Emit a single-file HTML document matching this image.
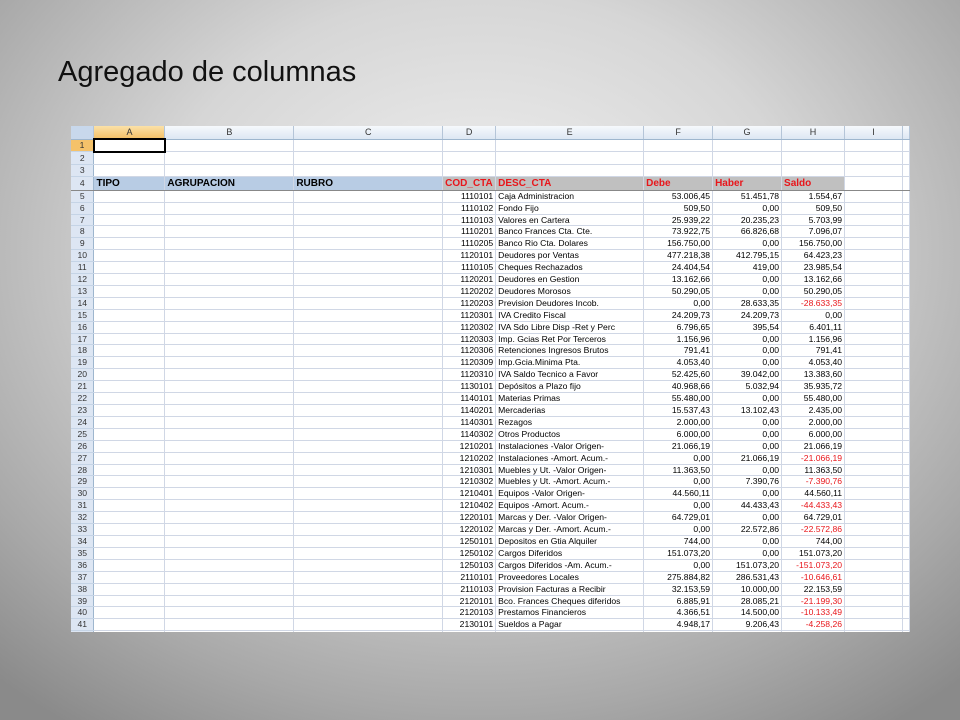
<!DOCTYPE html>
<html><head><meta charset="utf-8"><style>
html,body{margin:0;padding:0}
body{width:960px;height:720px;overflow:hidden;position:relative;background:radial-gradient(ellipse 75% 80% at 50% 35%,#f2f2f2 0%,#d6d6d6 45%,#a8a8a8 80%,#8a8a8a 100%);font-family:"Liberation Sans",sans-serif}
h1{position:absolute;left:58px;top:56px;margin:0;font-weight:normal;font-size:29px;color:#111}
#sh{position:absolute;left:71px;top:126px;width:839px;height:506px;overflow:hidden;background:#fff}
table{border-collapse:collapse;table-layout:fixed;font-size:8.6px;color:#000}
td{border-right:1px solid #d0d7e5;border-bottom:1px solid #d0d7e5;padding:0 2px;height:10.9px;line-height:10.9px;white-space:nowrap;overflow:hidden}
td.n{background:#dde6f3;color:#333;text-align:center;border-right:1px solid #9eb6ce;border-bottom:1px solid #c5d4e6}
td.r{text-align:right}
tr.h td{background:linear-gradient(#f6f9fc,#dde7f3);text-align:center;height:12px;line-height:12px;color:#333;border-right:1px solid #b5c5d8;border-bottom:1px solid #9eb6ce;font-size:9px}
tr.h td.sel{background:linear-gradient(#fbe1a8,#f5c26a)}
tr.t td{height:13px;line-height:13px;font-weight:bold;font-size:10px;border-bottom:1px solid #888}
tr.t td.b{background:#b8cce4;color:#000}
tr.t td.g{background:#c0c0c0;color:#e8161b}
.m{color:#e8161b}
</style></head><body>
<h1>Agregado de columnas</h1>
<div id="sh"><table>
<colgroup><col style="width:23px"><col style="width:71px"><col style="width:129px"><col style="width:149px"><col style="width:53px"><col style="width:148px"><col style="width:69px"><col style="width:69px"><col style="width:63px"><col style="width:58px"><col style="width:7px"></colgroup>
<tr class="h"><td class="n" style="background:#c8d8ec"></td><td class="sel">A</td><td>B</td><td>C</td><td>D</td><td>E</td><td>F</td><td>G</td><td>H</td><td>I</td><td></td></tr>
<tr><td class="n" style="background:#f5c26a">1</td><td style="border:2px solid #000"></td><td></td><td></td><td></td><td></td><td></td><td></td><td></td><td></td><td></td></tr>
<tr><td class="n">2</td><td></td><td></td><td></td><td></td><td></td><td></td><td></td><td></td><td></td><td></td></tr>
<tr><td class="n">3</td><td></td><td></td><td></td><td></td><td></td><td></td><td></td><td></td><td></td><td></td></tr>
<tr class="t"><td class="n" style="font-weight:normal;font-size:8.6px;color:#333">4</td><td class="b">TIPO</td><td class="b">AGRUPACION</td><td class="b">RUBRO</td><td class="g">COD_CTA</td><td class="g">DESC_CTA</td><td class="g">Debe</td><td class="g">Haber</td><td class="g">Saldo</td><td style="background:#fff"></td><td></td></tr>
<tr><td class="n">5</td><td></td><td></td><td></td><td class="r">1110101</td><td>Caja Administracion</td><td class="r">53.006,45</td><td class="r">51.451,78</td><td class="r">1.554,67</td><td></td><td></td></tr>
<tr><td class="n">6</td><td></td><td></td><td></td><td class="r">1110102</td><td>Fondo Fijo</td><td class="r">509,50</td><td class="r">0,00</td><td class="r">509,50</td><td></td><td></td></tr>
<tr><td class="n">7</td><td></td><td></td><td></td><td class="r">1110103</td><td>Valores en Cartera</td><td class="r">25.939,22</td><td class="r">20.235,23</td><td class="r">5.703,99</td><td></td><td></td></tr>
<tr><td class="n">8</td><td></td><td></td><td></td><td class="r">1110201</td><td>Banco Frances Cta. Cte.</td><td class="r">73.922,75</td><td class="r">66.826,68</td><td class="r">7.096,07</td><td></td><td></td></tr>
<tr><td class="n">9</td><td></td><td></td><td></td><td class="r">1110205</td><td>Banco Rio Cta. Dolares</td><td class="r">156.750,00</td><td class="r">0,00</td><td class="r">156.750,00</td><td></td><td></td></tr>
<tr><td class="n">10</td><td></td><td></td><td></td><td class="r">1120101</td><td>Deudores por Ventas</td><td class="r">477.218,38</td><td class="r">412.795,15</td><td class="r">64.423,23</td><td></td><td></td></tr>
<tr><td class="n">11</td><td></td><td></td><td></td><td class="r">1110105</td><td>Cheques Rechazados</td><td class="r">24.404,54</td><td class="r">419,00</td><td class="r">23.985,54</td><td></td><td></td></tr>
<tr><td class="n">12</td><td></td><td></td><td></td><td class="r">1120201</td><td>Deudores en Gestion</td><td class="r">13.162,66</td><td class="r">0,00</td><td class="r">13.162,66</td><td></td><td></td></tr>
<tr><td class="n">13</td><td></td><td></td><td></td><td class="r">1120202</td><td>Deudores Morosos</td><td class="r">50.290,05</td><td class="r">0,00</td><td class="r">50.290,05</td><td></td><td></td></tr>
<tr><td class="n">14</td><td></td><td></td><td></td><td class="r">1120203</td><td>Prevision Deudores Incob.</td><td class="r">0,00</td><td class="r">28.633,35</td><td class="r m">-28.633,35</td><td></td><td></td></tr>
<tr><td class="n">15</td><td></td><td></td><td></td><td class="r">1120301</td><td>IVA Credito Fiscal</td><td class="r">24.209,73</td><td class="r">24.209,73</td><td class="r">0,00</td><td></td><td></td></tr>
<tr><td class="n">16</td><td></td><td></td><td></td><td class="r">1120302</td><td>IVA Sdo Libre Disp -Ret y Perc</td><td class="r">6.796,65</td><td class="r">395,54</td><td class="r">6.401,11</td><td></td><td></td></tr>
<tr><td class="n">17</td><td></td><td></td><td></td><td class="r">1120303</td><td>Imp. Gcias Ret Por Terceros</td><td class="r">1.156,96</td><td class="r">0,00</td><td class="r">1.156,96</td><td></td><td></td></tr>
<tr><td class="n">18</td><td></td><td></td><td></td><td class="r">1120306</td><td>Retenciones Ingresos Brutos</td><td class="r">791,41</td><td class="r">0,00</td><td class="r">791,41</td><td></td><td></td></tr>
<tr><td class="n">19</td><td></td><td></td><td></td><td class="r">1120309</td><td>Imp.Gcia.Minima Pta.</td><td class="r">4.053,40</td><td class="r">0,00</td><td class="r">4.053,40</td><td></td><td></td></tr>
<tr><td class="n">20</td><td></td><td></td><td></td><td class="r">1120310</td><td>IVA Saldo Tecnico a Favor</td><td class="r">52.425,60</td><td class="r">39.042,00</td><td class="r">13.383,60</td><td></td><td></td></tr>
<tr><td class="n">21</td><td></td><td></td><td></td><td class="r">1130101</td><td>Depósitos a Plazo fijo</td><td class="r">40.968,66</td><td class="r">5.032,94</td><td class="r">35.935,72</td><td></td><td></td></tr>
<tr><td class="n">22</td><td></td><td></td><td></td><td class="r">1140101</td><td>Materias Primas</td><td class="r">55.480,00</td><td class="r">0,00</td><td class="r">55.480,00</td><td></td><td></td></tr>
<tr><td class="n">23</td><td></td><td></td><td></td><td class="r">1140201</td><td>Mercaderias</td><td class="r">15.537,43</td><td class="r">13.102,43</td><td class="r">2.435,00</td><td></td><td></td></tr>
<tr><td class="n">24</td><td></td><td></td><td></td><td class="r">1140301</td><td>Rezagos</td><td class="r">2.000,00</td><td class="r">0,00</td><td class="r">2.000,00</td><td></td><td></td></tr>
<tr><td class="n">25</td><td></td><td></td><td></td><td class="r">1140302</td><td>Otros Productos</td><td class="r">6.000,00</td><td class="r">0,00</td><td class="r">6.000,00</td><td></td><td></td></tr>
<tr><td class="n">26</td><td></td><td></td><td></td><td class="r">1210201</td><td>Instalaciones -Valor Origen-</td><td class="r">21.066,19</td><td class="r">0,00</td><td class="r">21.066,19</td><td></td><td></td></tr>
<tr><td class="n">27</td><td></td><td></td><td></td><td class="r">1210202</td><td>Instalaciones -Amort. Acum.-</td><td class="r">0,00</td><td class="r">21.066,19</td><td class="r m">-21.066,19</td><td></td><td></td></tr>
<tr><td class="n">28</td><td></td><td></td><td></td><td class="r">1210301</td><td>Muebles y Ut. -Valor Origen-</td><td class="r">11.363,50</td><td class="r">0,00</td><td class="r">11.363,50</td><td></td><td></td></tr>
<tr><td class="n">29</td><td></td><td></td><td></td><td class="r">1210302</td><td>Muebles y Ut. -Amort. Acum.-</td><td class="r">0,00</td><td class="r">7.390,76</td><td class="r m">-7.390,76</td><td></td><td></td></tr>
<tr><td class="n">30</td><td></td><td></td><td></td><td class="r">1210401</td><td>Equipos -Valor Origen-</td><td class="r">44.560,11</td><td class="r">0,00</td><td class="r">44.560,11</td><td></td><td></td></tr>
<tr><td class="n">31</td><td></td><td></td><td></td><td class="r">1210402</td><td>Equipos -Amort. Acum.-</td><td class="r">0,00</td><td class="r">44.433,43</td><td class="r m">-44.433,43</td><td></td><td></td></tr>
<tr><td class="n">32</td><td></td><td></td><td></td><td class="r">1220101</td><td>Marcas y Der. -Valor Origen-</td><td class="r">64.729,01</td><td class="r">0,00</td><td class="r">64.729,01</td><td></td><td></td></tr>
<tr><td class="n">33</td><td></td><td></td><td></td><td class="r">1220102</td><td>Marcas y Der. -Amort. Acum.-</td><td class="r">0,00</td><td class="r">22.572,86</td><td class="r m">-22.572,86</td><td></td><td></td></tr>
<tr><td class="n">34</td><td></td><td></td><td></td><td class="r">1250101</td><td>Depositos en Gtia Alquiler</td><td class="r">744,00</td><td class="r">0,00</td><td class="r">744,00</td><td></td><td></td></tr>
<tr><td class="n">35</td><td></td><td></td><td></td><td class="r">1250102</td><td>Cargos Diferidos</td><td class="r">151.073,20</td><td class="r">0,00</td><td class="r">151.073,20</td><td></td><td></td></tr>
<tr><td class="n">36</td><td></td><td></td><td></td><td class="r">1250103</td><td>Cargos Diferidos -Am. Acum.-</td><td class="r">0,00</td><td class="r">151.073,20</td><td class="r m">-151.073,20</td><td></td><td></td></tr>
<tr><td class="n">37</td><td></td><td></td><td></td><td class="r">2110101</td><td>Proveedores Locales</td><td class="r">275.884,82</td><td class="r">286.531,43</td><td class="r m">-10.646,61</td><td></td><td></td></tr>
<tr><td class="n">38</td><td></td><td></td><td></td><td class="r">2110103</td><td>Provision Facturas a Recibir</td><td class="r">32.153,59</td><td class="r">10.000,00</td><td class="r">22.153,59</td><td></td><td></td></tr>
<tr><td class="n">39</td><td></td><td></td><td></td><td class="r">2120101</td><td>Bco. Frances Cheques diferidos</td><td class="r">6.885,91</td><td class="r">28.085,21</td><td class="r m">-21.199,30</td><td></td><td></td></tr>
<tr><td class="n">40</td><td></td><td></td><td></td><td class="r">2120103</td><td>Prestamos Financieros</td><td class="r">4.366,51</td><td class="r">14.500,00</td><td class="r m">-10.133,49</td><td></td><td></td></tr>
<tr><td class="n">41</td><td></td><td></td><td></td><td class="r">2130101</td><td>Sueldos a Pagar</td><td class="r">4.948,17</td><td class="r">9.206,43</td><td class="r m">-4.258,26</td><td></td><td></td></tr>
<tr><td class="n">42</td><td></td><td></td><td></td><td class="r">2130103</td><td>Seguridad Social a Pagar</td><td class="r">0,00</td><td class="r">5.000,07</td><td class="r m">-5.000,07</td><td></td><td></td></tr>
</table></div>
</body></html>
